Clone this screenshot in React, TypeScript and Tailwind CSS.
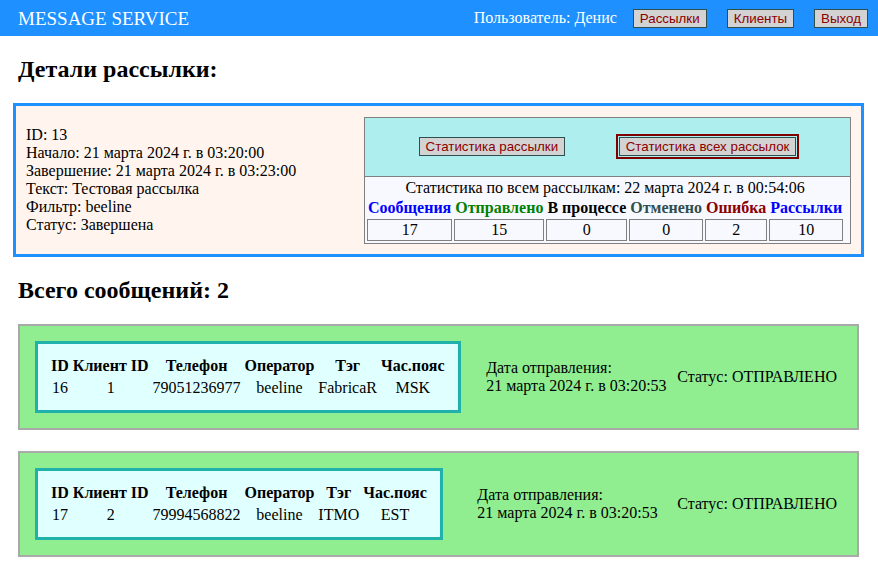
import React from "react";

const serif = "font-['Liberation_Serif','Times_New_Roman',serif]";
const btn =
  "font-['Liberation_Sans',Arial,sans-serif] text-[13.33px] leading-[normal] text-[#8b0000] bg-[#d3d3d3] border border-[#2f4f4f] px-[6px] py-px";

type Msg = {
  id: number;
  clientId: number;
  phone: string;
  operator: string;
  tag: string;
  tz: string;
  sent: string;
  status: string;
};

const messages: Msg[] = [
  { id: 16, clientId: 1, phone: "79051236977", operator: "beeline", tag: "FabricaR", tz: "MSK", sent: "21 марта 2024 г. в 03:20:53", status: "ОТПРАВЛЕНО" },
  { id: 17, clientId: 2, phone: "79994568822", operator: "beeline", tag: "ITMO", tz: "EST", sent: "21 марта 2024 г. в 03:20:53", status: "ОТПРАВЛЕНО" },
];

const stats = [
  { label: "Сообщения", value: 17, color: "text-[#0000ff]" },
  { label: "Отправлено", value: 15, color: "text-[#008000]" },
  { label: "В процессе", value: 0, color: "text-black" },
  { label: "Отменено", value: 0, color: "text-[#2f4f4f]" },
  { label: "Ошибка", value: 2, color: "text-[#8b0000]" },
  { label: "Рассылки", value: 10, color: "text-[#0000ff]" },
];

function MessageCard({ m }: { m: Msg }) {
  return (
    <div className="ml-[18px] mr-[19px] mb-[21px] flex items-center border-2 border-[#a9a9a9] bg-[#90ee90] p-[15px]">
      <div className="border-[3px] border-[#20b2aa] bg-[#e0ffff] px-[10px] py-[10px]">
        <table className="border-separate border-spacing-[2px]">
          <thead>
            <tr>
              {["ID", "Клиент ID", "Телефон", "Оператор", "Тэг", "Час.пояс"].map((h) => (
                <th key={h} className="p-px text-center font-bold whitespace-nowrap">
                  {h}
                </th>
              ))}
            </tr>
          </thead>
          <tbody>
            <tr>
              {[m.id, m.clientId, m.phone, m.operator, m.tag, m.tz].map((v, i) => (
                <td key={i} className="p-px text-center whitespace-nowrap">
                  {v}
                </td>
              ))}
            </tr>
          </tbody>
        </table>
      </div>
      <div className="flex flex-1 justify-center pl-[15px]">
        <div>
          Дата отправления:
          <br />
          {m.sent}
        </div>
      </div>
      <div className="pr-[5px]">Статус: {m.status}</div>
    </div>
  );
}

export default function App() {
  return (
    <div className={`${serif} min-h-[575px] bg-white text-[16px] leading-[normal] text-black`}>
      {/* шапка */}
      <header className="flex h-[36px] items-center bg-[#1e90ff] text-white">
        <div className="ml-[18px] pt-px text-[19px]">MESSAGE SERVICE</div>
        <div className="ml-auto">Пользователь: Денис</div>
        <button className={`${btn} ml-[16px]`}>Рассылки</button>
        <button className={`${btn} ml-[20px]`}>Клиенты</button>
        <button className={`${btn} ml-[20px] mr-[10px]`}>Выход</button>
      </header>

      <h2 className="mx-[18px] my-[19.92px] text-[24px] font-bold">Детали рассылки:</h2>

      {/* детали рассылки */}
      <div className="ml-[13px] mr-[14px] flex items-center justify-between border-[3px] border-[#1e90ff] bg-[#fff5ee] p-[10px]">
        <div className="leading-[18px]">
          <div>ID: 13</div>
          <div>Начало: 21 марта 2024 г. в 03:20:00</div>
          <div>Завершение: 21 марта 2024 г. в 03:23:00</div>
          <div>Текст: Тестовая рассылка</div>
          <div>Фильтр: beeline</div>
          <div>Статус: Завершена</div>
        </div>

        <div className="mt-px w-[487px] border border-[#808080]">
          <div className="flex h-[59px] items-center justify-evenly border-b border-[#808080] bg-[#afeeee]">
            <button className={btn}>Статистика рассылки</button>
            <button className={`${btn} outline-2 outline-offset-1 outline-[#800000]`}>
              Статистика всех рассылок
            </button>
          </div>
          <div className="bg-[#f8f8ff]">
            <table className="border-separate border-spacing-[2px]">
              <tbody>
                <tr>
                  <td colSpan={6} className="p-0 text-center">
                    Статистика по всем рассылкам: 22 марта 2024 г. в 00:54:06
                  </td>
                </tr>
                <tr>
                  {stats.map((s) => (
                    <th key={s.label} className={`px-px py-0 text-center font-bold whitespace-nowrap ${s.color}`}>
                      {s.label}
                    </th>
                  ))}
                </tr>
                <tr>
                  {stats.map((s) => (
                    <td key={s.label} className="border border-[#808080] p-px text-center">
                      {s.value}
                    </td>
                  ))}
                </tr>
              </tbody>
            </table>
          </div>
        </div>
      </div>

      <h2 className="mx-[18px] my-[19.92px] text-[24px] font-bold">Всего сообщений: 2</h2>

      {messages.map((m) => (
        <MessageCard key={m.id} m={m} />
      ))}
    </div>
  );
}
